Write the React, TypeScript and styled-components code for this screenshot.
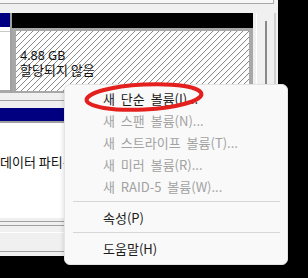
import styled, { createGlobalStyle } from "styled-components";

const GlobalStyle = createGlobalStyle`
  html, body {
    margin: 0;
    padding: 0;
    background: #000;
  }
  body {
    font-family: "Noto Sans CJK KR", "Noto Sans", sans-serif;
  }
`;

const Screen = styled.div`
  position: relative;
  width: 308px;
  height: 278px;
  overflow: hidden;
  background: #000;
`;

const Window = styled.div`
  display: flex;
  flex-direction: column;
  width: 278px;
  height: 256px;
  background: #f0f0f0;
  overflow: hidden;
`;

const TopStrip = styled.div`
  height: 14px;
  display: flex;
  flex-direction: column;
`;

const TopBox = styled.div`
  width: 273px;
  height: 3px;
  background: #f7f7f7;
  border-bottom: 1px solid #a8a8a8;
  border-right: 1px solid #a8a8a8;
`;

const DiskRow = styled.div`
  display: flex;
  height: 85px;
`;

const LabelCell = styled.div`
  width: 10px;
  display: flex;
  flex-direction: column;
  background: #fff;
`;

const NavyHeader = styled.div<{ $h: number }>`
  height: ${(p) => p.$h}px;
  background: #000080;
  flex-shrink: 0;
`;

const LabelBody = styled.div`
  flex: 1;
  border-top: 4px solid #fff;
  border-bottom: 3px solid #a8a8a8;
  background: #fff;
  box-shadow: inset 0 1px 0 #c8c8c8;
`;

const Divider = styled.div`
  width: 2px;
  background: #a0a0a0;
`;

const Partition = styled.div`
  width: 241px;
  display: flex;
  flex-direction: column;
`;

const BlackHeader = styled.div`
  height: 15px;
  background: #000;
`;

const Hatched = styled.div`
  flex: 1;
  border-style: solid;
  border-color: #a8a8a8;
  border-width: 3px 4px 2px 4px;
  padding: 17px 4px 0;
  background-color: #fff;
  background-image: repeating-linear-gradient(
    135deg,
    #fff 0px,
    #fff 3.2px,
    #8c8c8c 3.4px,
    #8c8c8c 4.1px,
    #fff 4.243px
  );
  font-size: 13px;
  line-height: 14px;
  color: #111;
`;

const Latin = styled.span`
  font-family: "Noto Sans", sans-serif;
  font-size: 12.5px;
`;

const SideArea = styled.div`
  flex: 1;
  display: flex;
  padding-left: 3px;
`;

const SideInner = styled.div`
  flex: 1;
  border-left: 1px solid #fff;
  border-right: 2px solid #d0d0d0;
  margin-right: 2px;
  display: flex;
  justify-content: center;
  padding-top: 8px;
`;

const ScrollBar = styled.div`
  width: 2px;
  background: #8a8a8a;
  margin-left: 1px;
`;

const Gap = styled.div`
  height: 16px;
  display: flex;
  flex-direction: column;
  justify-content: flex-end;
`;

const Line = styled.div<{ $color?: string; $mb?: number }>`
  height: 1px;
  background: ${(p) => p.$color ?? "#a0a0a0"};
  margin-bottom: ${(p) => p.$mb ?? 0}px;
`;

const DiskBody = styled.div`
  height: 67px;
  background: #fff;
  border-top: 2px solid #a0a0a0;
  padding: 32px 0 0 0;
  font-size: 13px;
  line-height: 14px;
  color: #111;
  white-space: nowrap;
`;

const StatusArea = styled.div`
  flex: 1;
  display: flex;
  flex-direction: column;
  padding-top: 3px;
`;

const StatusBar = styled.div`
  flex: 1;
  display: flex;
  border-top: 1px solid #a0a0a0;
  margin-top: 18px;
`;

const StatusCell = styled.div`
  width: 57px;
  border-right: 1px solid #c8c8c8;
  margin: 3px 0 1px;
`;

const Menu = styled.div`
  position: absolute;
  left: 64px;
  top: 84px;
  width: 222px;
  height: 175px;
  padding: 2px 0;
  box-sizing: content-box;
  background: #f9f9f9;
  border: 1px solid #e4e4e4;
  border-radius: 6px;
  box-shadow: -1px 2px 4px rgba(0, 0, 0, 0.12);
  display: flex;
  flex-direction: column;
`;

const MenuItem = styled.div<{ $disabled?: boolean }>`
  height: 22px;
  display: flex;
  align-items: center;
  padding-left: 38px;
  font-size: 13px;
  word-spacing: 3px;
  color: ${(p) => (p.$disabled ? "#a2a2a2" : "#1b1b1b")};
  white-space: pre;
`;

const Separator = styled.div`
  height: 1px;
  margin: 4px 7px 4px 8px;
  background: #d6d6d6;
`;

const Circle = styled.svg`
  position: absolute;
  left: 80px;
  top: 78px;
`;

export default function App() {
  return (
    <>
      <GlobalStyle />
      <Screen>
        <Window>
          <TopStrip>
            <TopBox />
          </TopStrip>
          <DiskRow>
            <LabelCell>
              <NavyHeader $h={14} />
              <LabelBody />
            </LabelCell>
            <Divider />
            <Partition>
              <BlackHeader />
              <Hatched>
                <Latin>4.88 GB</Latin>
                <br />
                할당되지 않음
              </Hatched>
            </Partition>
            <SideArea>
              <SideInner>
                <ScrollBar />
              </SideInner>
            </SideArea>
          </DiskRow>
          <Gap>
            <Line $mb={7} />
          </Gap>
          <NavyHeader $h={13} />
          <DiskBody>데이터 파티션</DiskBody>
          <StatusArea>
            <Line $mb={3} />
            <Line $mb={6} />
            <Line $color="#ffffff" />
            <StatusBar>
              <StatusCell />
            </StatusBar>
          </StatusArea>
        </Window>
        <Menu>
          <MenuItem>새 단순 볼륨(I)...</MenuItem>
          <MenuItem $disabled>새 스팬 볼륨(N)...</MenuItem>
          <MenuItem $disabled>새 스트라이프 볼륨(T)...</MenuItem>
          <MenuItem $disabled>새 미러 볼륨(R)...</MenuItem>
          <MenuItem $disabled>새 RAID-5 볼륨(W)...</MenuItem>
          <Separator />
          <MenuItem>속성(P)</MenuItem>
          <Separator />
          <MenuItem>도움말(H)</MenuItem>
        </Menu>
        <Circle width="130" height="40" viewBox="0 0 130 40">
          <ellipse
            cx="64"
            cy="19"
            rx="57.5"
            ry="12.5"
            fill="none"
            stroke="#e3201e"
            strokeWidth="4"
            transform="rotate(-3 64 19)"
          />
        </Circle>
      </Screen>
    </>
  );
}
